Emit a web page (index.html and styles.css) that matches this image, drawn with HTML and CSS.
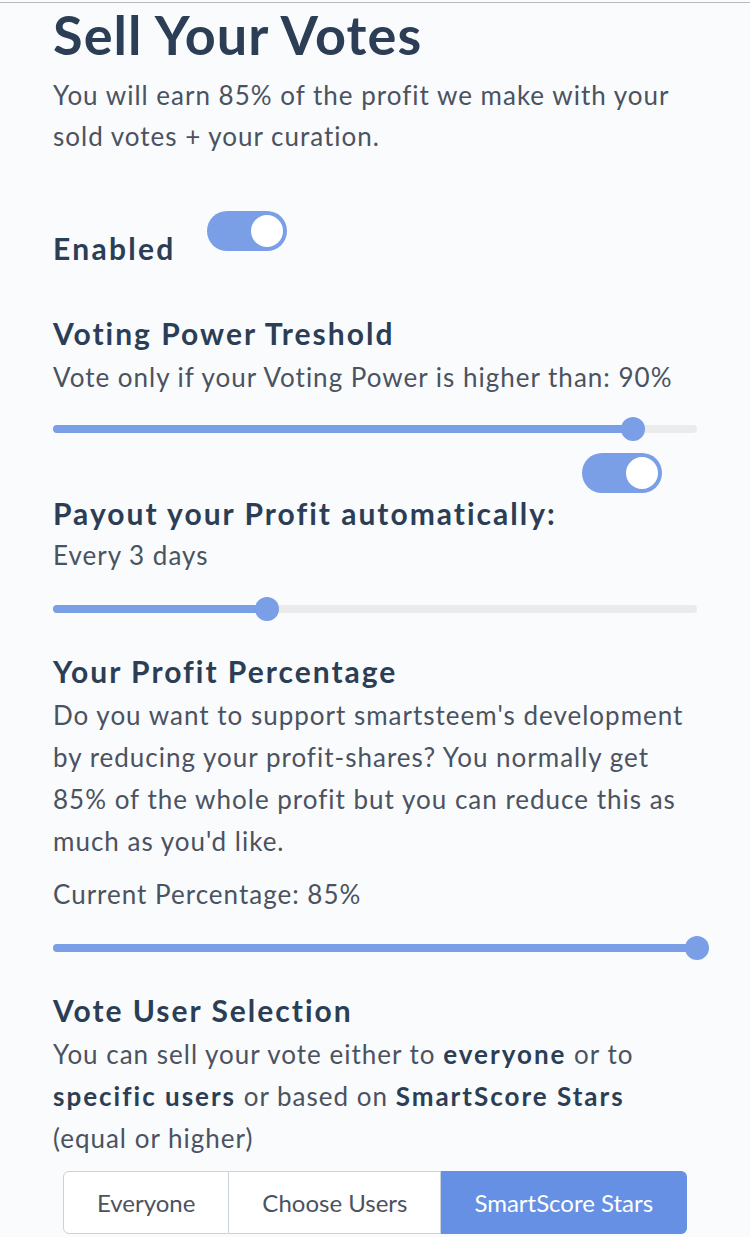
FILE: index.html
```html
<!DOCTYPE html>
<html lang="en">
<head>
    <meta charset="UTF-8">
    <meta name="viewport" content="width=device-width, initial-scale=1.0">
    <title>Sell Your Votes</title>
    <link rel="stylesheet" href="styles.css">
</head>
<body>
    <div class="topline"></div>
    <div class="page">
        <h1 class="title">Sell Your Votes</h1>
        <p class="lead">You will earn 85% of the profit we make with your sold votes + your curation.</p>

        <!-- Enabled switch -->
        <div class="enabled-row">
            <h3 class="label">Enabled</h3>
            <div class="toggle on"><span></span></div>
        </div>

        <!-- Voting power -->
        <h3 class="heading">Voting Power Treshold</h3>
        <p class="text">Vote only if your Voting Power is higher than: 90%</p>
        <div class="slider">
            <div class="track">
                <div class="fill" style="width: 90%"></div>
                <div class="thumb" style="left: 90%"></div>
            </div>
        </div>

        <!-- Payout -->
        <div class="toggle on payout-toggle"><span></span></div>
        <h3 class="heading payout">Payout your Profit automatically:</h3>
        <p class="text">Every 3 days</p>
        <div class="slider low">
            <div class="track">
                <div class="fill" style="width: 33.3%"></div>
                <div class="thumb" style="left: 33.3%"></div>
            </div>
        </div>

        <!-- Profit percentage -->
        <h3 class="heading spaced">Your Profit Percentage</h3>
        <p class="text">Do you want to support smartsteem's development by reducing your profit-shares? You normally get 85% of the whole profit but you can reduce this as much as you'd like.</p>
        <p class="text current">Current Percentage: 85%</p>
        <div class="slider low">
            <div class="track">
                <div class="fill" style="width: 100%"></div>
                <div class="thumb" style="left: 100%"></div>
            </div>
        </div>

        <!-- User selection -->
        <h3 class="heading spaced">Vote User Selection</h3>
        <p class="text">You can sell your vote either to <b>everyone</b> or to <b>specific users</b> or based on <b>SmartScore Stars</b> (equal or higher)</p>
        <div class="btn-group">
            <div class="btn">Everyone</div>
            <div class="btn">Choose Users</div>
            <div class="btn active">SmartScore Stars</div>
        </div>
    </div>
</body>
</html>
```

FILE: styles.css
```css
body {
    background-color: #f9fbfd;
    color: #4b5260;
    font-family: Lato, "Open Sans", sans-serif;
    margin: 0;
    padding: 0;
}

.topline {
    height: 1px;
    margin-top: 2px;
    background-color: #b8bcc2;
}

.page {
    padding: 0 53px;
}

.title {
    color: #2c3e55;
    font-size: 54px;
    font-weight: 700;
    letter-spacing: 1.1px;
    line-height: 64px;
    margin: 0;
}

.lead {
    font-size: 26px;
    letter-spacing: 1px;
    line-height: 41px;
    margin: 8px 0 0;
}

.enabled-row {
    display: flex;
    align-items: flex-start;
    margin-top: 54px;
}

.label {
    color: #2c3e55;
    font-size: 30px;
    font-weight: 700;
    letter-spacing: 2.3px;
    line-height: 42px;
    margin: 16px 31px 0 0;
}

.heading {
    color: #2c3e55;
    font-size: 30px;
    font-weight: 700;
    letter-spacing: 2px;
    line-height: 44px;
    margin: 42px 0 0;
}

.heading.payout {
    line-height: 40px;
    margin-top: 0;
}

.heading.spaced {
    margin-top: 28px;
}

.text {
    font-size: 26px;
    letter-spacing: 1px;
    line-height: 42px;
    margin: 1px 0 0;
}

.text b {
    color: #2c3e55;
    font-weight: 700;
    letter-spacing: 2px;
}

.text.current {
    margin-top: 11px;
}

.toggle {
    width: 80px;
    height: 40px;
    border-radius: 20px;
    background-color: #d6dce4;
    display: flex;
    align-items: center;
    padding: 0 4px;
    box-sizing: border-box;
}

.toggle span {
    width: 32px;
    height: 32px;
    border-radius: 50%;
    background-color: #fff;
}

.toggle.on {
    background-color: #7a9fe6;
    justify-content: flex-end;
}

.payout-toggle {
    margin: 12px 0 0 529px;
}

.slider {
    height: 24px;
    display: flex;
    align-items: center;
    margin-top: 19px;
}

.slider.low {
    margin-top: 21px;
}

.track {
    position: relative;
    width: 100%;
    height: 8px;
    border-radius: 4px;
    background-color: #ebebeb;
}

.fill {
    height: 100%;
    border-radius: 4px;
    background-color: #7a9fe6;
}

.thumb {
    position: absolute;
    top: 50%;
    width: 24px;
    height: 24px;
    margin: -12px 0 0 -12px;
    border-radius: 50%;
    background-color: #7a9fe6;
}

.btn-group {
    display: flex;
    justify-content: center;
    margin-top: 12px;
}

.btn {
    height: 63px;
    display: flex;
    align-items: center;
    padding: 0 33px;
    font-size: 24px;
    color: #4b5260;
    background-color: #fff;
    border: 1px solid #c9d2da;
    border-left: none;
    box-sizing: border-box;
}

.btn:first-child {
    border-left: 1px solid #c9d2da;
    border-radius: 6px 0 0 6px;
}

.btn:last-child {
    border-radius: 0 6px 6px 0;
}

.btn.active {
    background-color: #6690e3;
    border-color: #6690e3;
    color: #fff;
}
```
